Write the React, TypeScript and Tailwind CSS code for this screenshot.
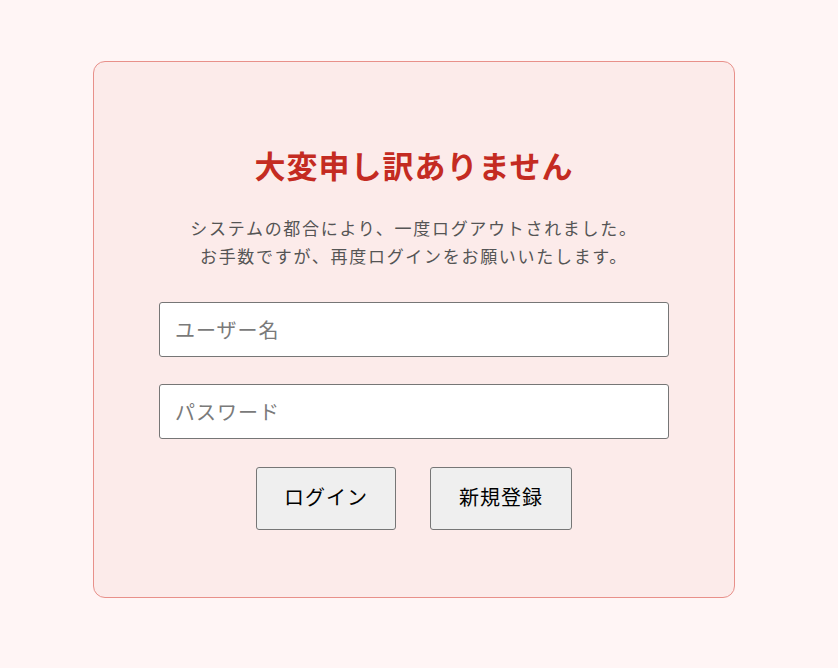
export default function App() {
  return (
    <div
      className="min-h-[668px] w-full bg-[#fff5f5] pt-[61px]"
      style={{ fontFamily: '"Noto Sans CJK JP", "Noto Sans", sans-serif' }}
    >
      <div className="ml-[93px] w-[642px] rounded-[12px] border border-[#e8908a] bg-[#fcebea] pt-[83px] pb-[67px] flex flex-col items-center">
        <h1 className="text-[31px] leading-[40px] font-bold text-[#c42b22] tracking-[1px]">
          大変申し訳ありません
        </h1>
        <p className="mt-[29px] text-center text-[17px] leading-[28px] tracking-[1.7px] text-[#555]">
          システムの都合により、一度ログアウトされました。
          <br />
          お手数ですが、再度ログインをお願いいたします。
        </p>
        <div className="mt-[32px] flex flex-col gap-[27px]">
          <input
            type="text"
            placeholder="ユーザー名"
            className="h-[55px] w-[510px] rounded-[3px] border border-[#767676] bg-white px-[15px] text-[20px] tracking-[1px] placeholder:text-[#7a7a7a] outline-none"
          />
          <input
            type="password"
            placeholder="パスワード"
            className="h-[55px] w-[510px] rounded-[3px] border border-[#767676] bg-white px-[15px] text-[20px] tracking-[1px] placeholder:text-[#7a7a7a] outline-none"
          />
        </div>
        <div className="mt-[28px] flex gap-[34px]">
          <button className="h-[63px] w-[140px] rounded-[3px] border border-[#767676] bg-[#efefef] pb-[3px] text-[20px] tracking-[1px] text-black">
            ログイン
          </button>
          <button className="h-[63px] w-[142px] rounded-[3px] border border-[#767676] bg-[#efefef] pb-[3px] text-[20px] tracking-[1px] text-black">
            新規登録
          </button>
        </div>
      </div>
    </div>
  );
}
